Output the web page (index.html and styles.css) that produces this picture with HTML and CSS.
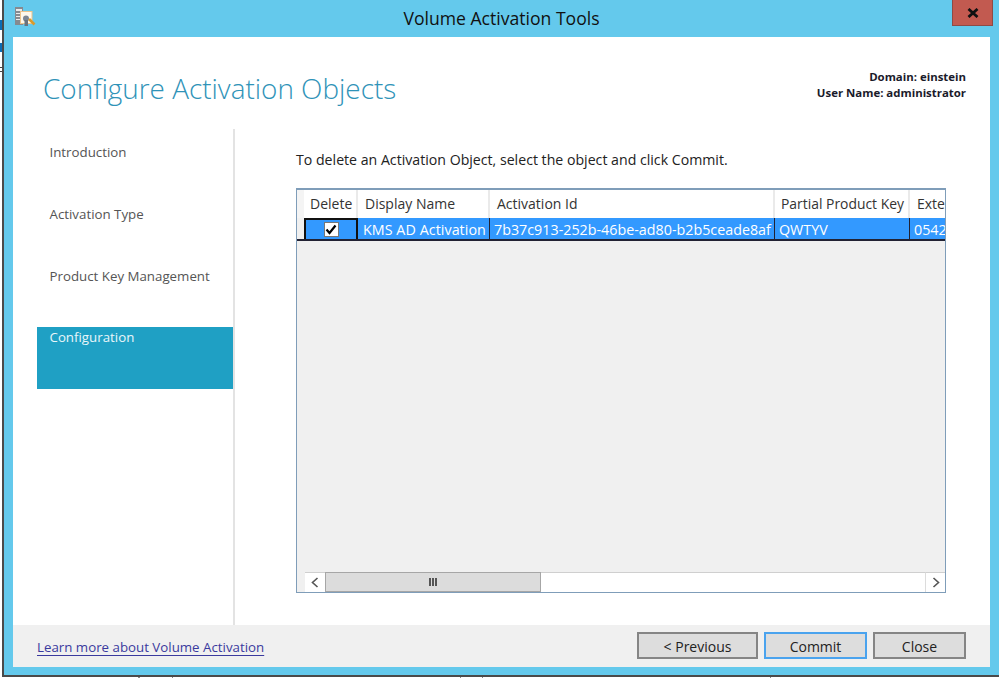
FILE: index.html
```html
<!DOCTYPE html>
<html lang="en">
<head>
<meta charset="utf-8">
<title>Volume Activation Tools</title>
<link rel="stylesheet" href="styles.css">
</head>
<body>
<div class="desk">
  <div class="window">
    <header class="titlebar">
      <div class="app-icon">
        <svg width="22" height="22" viewBox="0 0 22 22">
          <rect x="0" y="1" width="8" height="18" fill="#858a90"/>
          <rect x="1" y="3" width="6" height="2" fill="#e8eaec"/>
          <rect x="1" y="7" width="6" height="1" fill="#e8eaec"/>
          <rect x="1" y="10" width="6" height="1" fill="#e8eaec"/>
          <rect x="1" y="13" width="6" height="1" fill="#e8eaec"/>
          <rect x="5.500" y="5.500" width="11.500" height="12" fill="#fdf8ec" stroke="#ecc48c"/>
          <ellipse cx="11" cy="12.500" rx="3" ry="3" fill="#7d8794"/>
          <rect x="9.500" y="14" width="3.500" height="6" fill="#68727f"/>
          <path d="M14 13l5.500 5.500" stroke="#d99a2b" stroke-width="2.600" fill="none"/>
        </svg>
      </div>
      <div class="title">Volume Activation Tools</div>
      <div class="close-wrap">
        <button class="close-x" type="button" aria-label="Close">
          <svg width="12" height="10" viewBox="0 0 12 10"><path d="M1.500 1L10.500 9M10.500 1L1.500 9" stroke="#111" stroke-width="2.800"/></svg>
        </button>
      </div>
    </header>
    <div class="panel">
      <div class="head">
        <h1 class="page-title">Configure Activation Objects</h1>
        <div class="identity">
          <div>Domain: einstein</div>
          <div>User Name: administrator</div>
        </div>
      </div>
      <div class="middle">
        <nav class="steps">
          <div class="step">Introduction</div>
          <div class="step">Activation Type</div>
          <div class="step">Product Key Management</div>
          <div class="step current">Configuration</div>
        </nav>
        <main class="content">
          <p class="hint">To delete an Activation Object, select the object and click Commit.</p>
          <div class="grid-box">
            <div class="rows">
              <div class="row header">
                <div class="cell rowhead"></div>
                <div class="cell c-del center">Delete</div>
                <div class="cell c-name">Display Name</div>
                <div class="cell c-id">Activation Id</div>
                <div class="cell c-key">Partial Product Key</div>
                <div class="cell c-ext">Exte</div>
              </div>
              <div class="row selected">
                <div class="cell rowhead"></div>
                <div class="cell c-del focus"><span class="check">
                  <svg width="12" height="11" viewBox="0 0 12 11"><path d="M1.500 5.500L4.500 9L10.500 1.500" stroke="#000" stroke-width="2.200" fill="none"/></svg>
                </span></div>
                <div class="cell c-name">KMS AD Activation</div>
                <div class="cell c-id">7b37c913-252b-46be-ad80-b2b5ceade8af</div>
                <div class="cell c-key">QWTYV</div>
                <div class="cell c-ext">0542</div>
              </div>
            </div>
            <div class="hscroll">
              <div class="arrow">
                <svg width="8" height="11" viewBox="0 0 8 11"><path d="M6.500 1L1.500 5.500L6.500 10" stroke="#555" stroke-width="1.600" fill="none"/></svg>
              </div>
              <div class="thumb"><span class="grip"></span><span class="grip"></span><span class="grip"></span></div>
              <div class="track"></div>
              <div class="arrow right">
                <svg width="8" height="11" viewBox="0 0 8 11"><path d="M1.500 1L6.500 5.500L1.500 10" stroke="#555" stroke-width="1.600" fill="none"/></svg>
              </div>
            </div>
          </div>
        </main>
      </div>
      <footer class="foot">
        <a class="learn" href="#">Learn more about Volume Activation</a>
        <div class="buttons">
          <button class="btn prev" type="button">&lt; Previous</button>
          <button class="btn commit" type="button">Commit</button>
          <button class="btn close" type="button">Close</button>
        </div>
      </footer>
    </div>
  </div>
</div>
</body>
</html>
```

FILE: styles.css
```css
* { box-sizing: border-box; }
html, body { margin: 0; padding: 0; }
body { background: #fff; font-family: "Open Sans", "Noto Sans", sans-serif; overflow: hidden; }
.desk {
  width: 999px;
  height: 678px;
  padding-left: 2px;
  background:
    linear-gradient(#0b6cb5, #0b6cb5) 0 20px / 2px 10px no-repeat,
    linear-gradient(#0b6cb5, #0b6cb5) 0 43px / 2px 9px no-repeat,
    linear-gradient(#444, #444) 0 67px / 2px 1px no-repeat,
    linear-gradient(#444, #444) 0 71px / 2px 1px no-repeat,
    linear-gradient(#888, #888) 138px 677px / 2px 1px no-repeat,
    linear-gradient(#888, #888) 172px 677px / 1px 1px no-repeat,
    linear-gradient(#888, #888) 460px 677px / 1px 1px no-repeat,
    linear-gradient(#888, #888) 482px 677px / 1px 1px no-repeat,
    linear-gradient(#888, #888) 770px 677px / 1px 1px no-repeat,
    #fff;
}
.window {
  height: 677px;
  background: #64c9ec;
  border-left: 2px solid #4a4a4a;
  border-bottom: 2px solid #4a4a4a;
  display: flex;
  flex-direction: column;
}
.titlebar {
  height: 37px;
  display: grid;
  grid-template-columns: 1fr auto 1fr;
  flex: none;
}
.app-icon { padding: 6px 0 0 11px; }
.title { font-size: 17.6px; line-height: 20px; padding-top: 8px; color: #111; }
.close-wrap { display: flex; justify-content: flex-end; padding-right: 6px; }
.close-x {
  width: 41px; height: 26px; padding: 0; margin: 0;
  background: #c25a50;
  border: 1px solid #8e4a45;
  border-top: 0;
  display: flex; align-items: center; justify-content: center;
}
.panel {
  width: 977px;
  height: 630px;
  margin-left: 9px;
  background: #fff;
  display: flex;
  flex-direction: column;
}
.head { height: 92px; flex: none; display: flex; justify-content: space-between; padding: 31px 24px 0 30px; }
.page-title { margin: 0; font-size: 27.9px; line-height: 40px; font-weight: 300; color: #2f93b8; }
.identity { padding-top: 1px; font-size: 11.42px; line-height: 16px; font-weight: 700; text-align: right; color: #1a1a2a; }
.middle { flex: 1; display: flex; min-height: 0; }
.steps { width: 222px; flex: none; padding: 12px 0 0 24px; border-right: 2px solid #e3e3e3; }
.step { height: 62px; padding: 1px 0 0 12.5px; font-size: 13.3px; line-height: 20px; color: #555; }
.step.current { padding-top: 0; background: #1fa0c4; color: #e9f6fa; }
.content { flex: 1; padding: 21px 44px 0 61px; min-width: 0; }
.hint { margin: 0 0 18px; font-size: 14.15px; line-height: 20px; color: #222; white-space: nowrap; }
.grid-box {
  width: 650px; height: 405px;
  border: 1px solid #7f9db9;
  border-top-width: 2px;
  background: #f0f0f0;
  display: flex; flex-direction: column;
  overflow: hidden;
}
.rows { flex: 1; min-height: 0; overflow: hidden; }
.row { display: flex; width: 700px; }
.row.header { height: 28px; background: #fff; }
.row.selected { height: 23px; background: #3399ff; color: #fff; border-bottom: 2px solid #223; }
.cell { font-size: 14px; line-height: 28px; padding-left: 7px; white-space: nowrap; overflow: hidden; flex: none; color: inherit; }
.header .cell { color: #333; border-right: 2px solid #eaeaea; }
.header .c-key { padding-left: 6px; font-size: 13.9px; }
.selected .cell { font-size: 14.3px; line-height: 23px; padding-left: 4px; border-right: 1px solid #223; }
.selected .c-name { padding-left: 5px; letter-spacing: .05px; }
.rowhead { width: 7px; padding: 0; }
.header .rowhead { background: #f4f4f4; border-right: 0; }
.selected .rowhead { background: #f0f0f0; border-right: 0; padding-left: 0; }
.c-del { width: 54px; }
.c-del.center { padding-left: 6px; }
.c-name { width: 132px; }
.c-id { width: 285px; }
.c-key { width: 135px; }
.c-ext { width: 60px; }
.selected .focus { display: flex; align-items: center; justify-content: center; border: 2px solid #111; border-bottom: 0; padding: 0; }
.check { width: 15px; height: 15px; background: #fff; border: 1px solid #777; display: flex; align-items: center; justify-content: center; }
.hscroll { height: 20px; flex: none; display: flex; background: #f0f0f0; padding-left: 8px; }
.arrow { width: 20px; background: #fff; border-top: 1px solid #cfcfcf; display: flex; align-items: center; justify-content: center; }
.arrow.right { border-left: 1px solid #dcdcdc; }
.thumb { width: 216px; background: #dcdcdc; border: 1px solid #a6a6a6; display: flex; align-items: center; justify-content: center; gap: 1px; }
.grip { width: 2px; height: 8px; background: #555; }
.track { flex: 1; background: #fff; border-top: 1px solid #cfcfcf; }
.foot { height: 42px; flex: none; background: #f0f0f0; display: flex; justify-content: space-between; padding: 7px 24px 0 24px; }
.learn { font-size: 13.3px; line-height: 30px; height: 30px; color: #3a3a9e; text-decoration: underline; text-underline-offset: 3px; }
.buttons { display: flex; gap: 6px; }
.btn {
  height: 27px; padding: 1px 0 0; margin: 0;
  background: #dddddd;
  border: 2px solid #858585;
  font-family: inherit; font-size: 14px; color: #222;
}
.prev { width: 121px; }
.commit { width: 103px; border-color: #4aa3ee; }
.close { width: 93px; }
```
